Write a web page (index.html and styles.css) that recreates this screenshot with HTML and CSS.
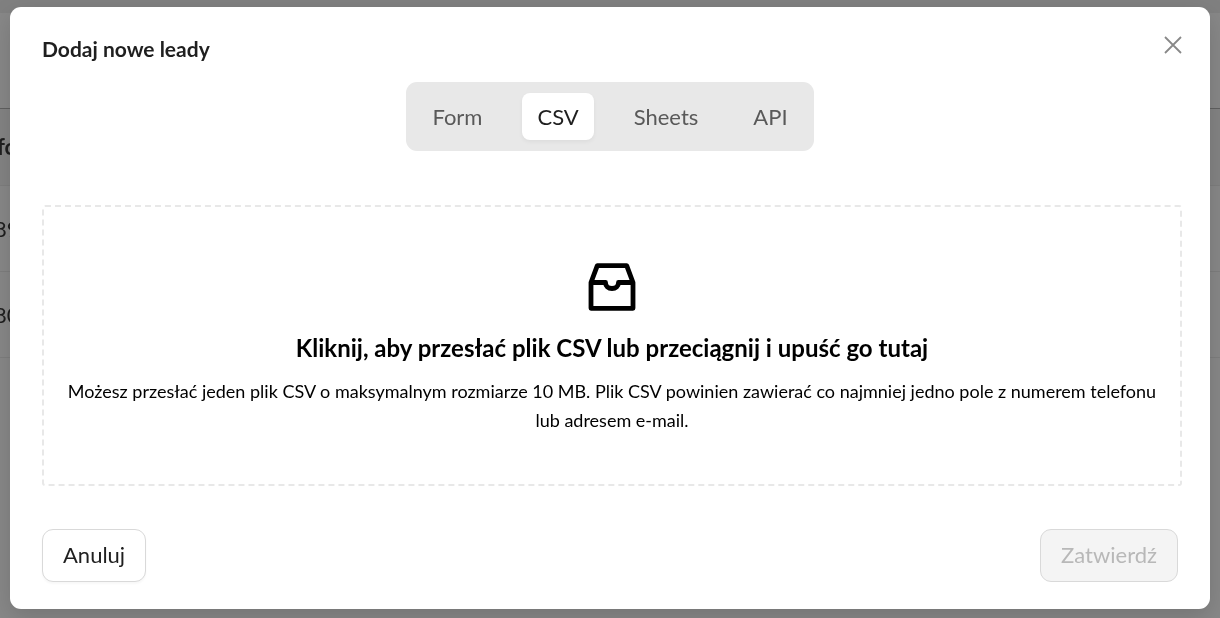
FILE: index.html
```html
<!DOCTYPE html>
<html lang="pl">
<head>
<meta charset="utf-8">
<meta name="viewport" content="width=device-width, initial-scale=1">
<title>Dodaj nowe leady</title>
<link rel="stylesheet" href="styles.css">
</head>
<body>
<div class="backdrop" aria-hidden="true">
  <div class="backdrop-bar"></div>
  <div class="backdrop-space"></div>
  <div class="backdrop-row backdrop-head">fo</div>
  <div class="backdrop-row">89</div>
  <div class="backdrop-row">80</div>
</div>
<main class="dialog" role="dialog" aria-labelledby="dialog-title">
  <header class="dialog-header">
    <h1 class="dialog-title" id="dialog-title">Dodaj nowe leady</h1>
    <button class="close" type="button" aria-label="Zamknij">
      <svg viewBox="0 0 18 18" width="18" height="18" fill="none" stroke="currentColor" stroke-width="1.8"><path d="M1 1l16 16M17 1l-16 16"/></svg>
    </button>
  </header>
  <nav class="tabs" role="tablist">
    <button class="tab" type="button" role="tab">Form</button>
    <button class="tab tab-active" type="button" role="tab" aria-selected="true">CSV</button>
    <button class="tab" type="button" role="tab">Sheets</button>
    <button class="tab" type="button" role="tab">API</button>
  </nav>
  <button class="dropzone" type="button">
    <svg class="dropzone-icon" viewBox="0 0 48 48" width="48" height="48" fill="none" stroke="currentColor" stroke-width="4.8" stroke-linejoin="round"><path d="M3 19.500L9.300 2.700H38.700L45 19.500V45.300H3Z"/><path d="M3 19.500H17.500C17.500 23.200 20.300 25.500 24 25.500S30.500 23.200 30.500 19.500H45"/></svg>
    <span class="dropzone-title">Kliknij, aby przesłać plik CSV lub przeciągnij i upuść go tutaj</span>
    <span class="dropzone-hint">Możesz przesłać jeden plik CSV o maksymalnym rozmiarze 10 MB. Plik CSV powinien zawierać co najmniej jedno pole z numerem telefonu lub adresem e-mail.</span>
  </button>
  <footer class="dialog-footer">
    <button class="button" type="button">Anuluj</button>
    <button class="button" type="button" disabled>Zatwierdź</button>
  </footer>
</main>
</body>
</html>
```
FILE: styles.css
```css
* {
  box-sizing: border-box;
}

body {
  margin: 0;
  padding: 7px 10px 9px;
  min-height: 100vh;
  background: #888;
  color: #1f1f1f;
  font-family: Lato, "Open Sans", sans-serif;
  font-size: 22px;
  line-height: 32px;
}

button {
  font: inherit;
  cursor: pointer;
}

/* Dimmed page behind the dialog */
.backdrop {
  position: fixed;
  inset: 0;
  overflow: hidden;
}

.backdrop-bar {
  height: 13px;
  background: #808080;
}

.backdrop-space {
  height: 96px;
  border-bottom: 1px solid #606060;
}

.backdrop-row {
  display: flex;
  align-items: center;
  height: 86px;
  border-bottom: 1px solid #7e7e7e;
  text-indent: -6px;
}

.backdrop-head {
  height: 77px;
  background: #848484;
  font-weight: 700;
  text-indent: -3px;
}

.dialog {
  position: relative;
  padding: 26px 32px 27px;
  border-radius: 11px;
  background: #fff;
  box-shadow: 0 8px 24px rgba(0, 0, 0, 0.15);
}

.dialog-header {
  display: flex;
  align-items: flex-start;
  justify-content: space-between;
}

.dialog-title {
  margin: 0;
  font-size: 21px;
  font-weight: 700;
  line-height: 32px;
}

.close {
  display: flex;
  margin-right: -4px;
  padding: 3px 0;
  border: 0;
  background: none;
  color: #888;
}

.tabs {
  display: flex;
  gap: 25px;
  width: fit-content;
  margin: 17px auto 54px;
  padding: 11px;
  border-radius: 11px;
  background: #e8e8e8;
}

.tab {
  padding: 8px 15px;
  border: 0;
  border-radius: 8px;
  background: none;
  color: #595959;
  line-height: 31px;
}

.tab-active {
  background: #fff;
  color: #1f1f1f;
  box-shadow: 0 2px 4px rgba(0, 0, 0, 0.05);
}

.dropzone {
  display: flex;
  flex-direction: column;
  align-items: center;
  width: calc(100% + 4px);
  padding: 56px 16px 49px;
  border: 2px dashed #e8e8e8;
  border-radius: 3px;
  background: none;
  color: #000;
  text-align: center;
}

.dropzone-icon {
  margin-bottom: 20px;
}

.dropzone-title {
  margin-bottom: 12px;
  font-size: 24px;
  font-weight: 700;
  line-height: 34px;
}

.dropzone-hint {
  font-size: 18px;
  line-height: 29px;
}

.dialog-footer {
  display: flex;
  justify-content: space-between;
  margin-top: 43px;
}

.button {
  padding: 9px 20px 11px;
  border: 1px solid #d9d9d9;
  border-radius: 11px;
  background: #fff;
  color: #1f1f1f;
  line-height: 31px;
  box-shadow: 0 2px 2px rgba(0, 0, 0, 0.03);
}

.button:disabled {
  background: #f4f4f4;
  color: #b8b8b8;
  box-shadow: none;
  cursor: not-allowed;
}
```
